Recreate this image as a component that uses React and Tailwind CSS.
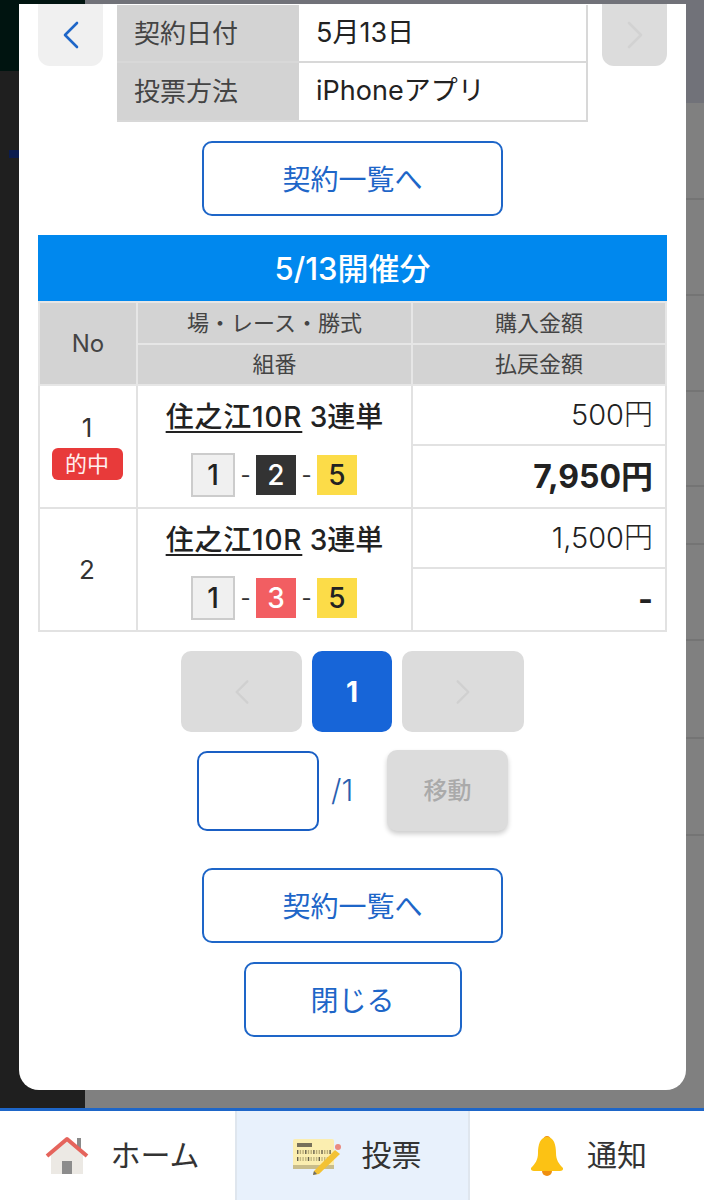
import { useState } from 'react'

function Chevron({ dir, className }) {
  return (
    <svg className={className} viewBox="0 0 18 28" fill="none" stroke="currentColor" strokeWidth="2.6" strokeLinecap="round" strokeLinejoin="round">
      <path d={dir === 'left' ? 'M15 2 L3 14 L15 26' : 'M3 2 L15 14 L3 26'} />
    </svg>
  )
}

function OutlineButton({ label, width }) {
  return (
    <button className={`${width} h-[75px] pt-[3px] border-2 border-[#1e66c8] rounded-[10px] bg-white text-[#1e66c8] text-[28px] leading-none flex items-center justify-center`}>
      {label}
    </button>
  )
}

function Ball({ n, variant }) {
  if (variant === 'white') {
    return <span className="w-[44px] h-[44px] bg-[#f0f0f0] border-2 border-[#cccccc] text-[#222] text-[28px] font-medium flex items-center justify-center">{n}</span>
  }
  if (variant === 'black') {
    return <span className="w-[40px] h-[40px] bg-[#333333] text-white text-[28px] font-medium flex items-center justify-center">{n}</span>
  }
  if (variant === 'red') {
    return <span className="w-[40px] h-[40px] bg-[#f25e62] text-white text-[28px] font-medium flex items-center justify-center">{n}</span>
  }
  return <span className="w-[40px] h-[40px] bg-[#fcdc48] text-[#222] text-[28px] font-medium flex items-center justify-center">{n}</span>
}

function Dash() {
  return <span className="w-[21px] text-center text-[#333] text-[22px] leading-none">-</span>
}

function BetCell({ second }) {
  return (
    <td rowSpan={2} className="border-2 border-[#e2e2e2] text-center align-top p-0">
      <div className="mt-[13px] text-[28px] leading-[36px] font-medium text-[#222]">
        <span className="underline underline-offset-[4px] tracking-[0.8px]">住之江10R</span> 3連単
      </div>
      <div className="mt-[18px] pr-[1px] flex items-center justify-center">
        <Ball n="1" variant="white" />
        <Dash />
        <Ball n={second} variant={second === '2' ? 'black' : 'red'} />
        <Dash />
        <Ball n="5" variant="yellow" />
      </div>
    </td>
  )
}

function ResultRows({ no, hit, second, buy, pay, top, bottom }) {
  return (
    <>
      <tr className={top}>
        <td rowSpan={2} className="border-2 border-[#e2e2e2] text-center text-[26px] leading-[34px] text-[#333] p-0 pr-[2px]">
          <div className={hit ? 'mt-[-3px]' : ''}>{no}</div>
          {hit && (
            <div className="mx-auto mt-[3px] w-[71px] h-[32px] bg-[#e83a3a] rounded-md text-[#ffeeee] text-[22px] leading-[32px]">的中</div>
          )}
        </td>
        <BetCell second={second} />
        <td className="border-2 border-[#e2e2e2] text-right pr-[12px] text-[29px] font-light text-[#222] p-0">{buy}</td>
      </tr>
      <tr className={bottom}>
        <td className="border-2 border-[#e2e2e2] text-right pr-[12px] text-[32px] font-bold text-[#222] p-0">{pay}</td>
      </tr>
    </>
  )
}

function HomeIcon() {
  return (
    <svg className="w-[44px] h-[40px]" viewBox="0 0 44 40">
      <rect x="32" y="2" width="4" height="12" fill="#8a8a8a" />
      <path d="M6 18 L22 4 L38 18 V38 H6 Z" fill="#ece9e4" />
      <path d="M2 20 L22 3 L42 20" fill="none" stroke="#e5645c" strokeWidth="4" strokeLinejoin="round" />
      <rect x="17" y="25" width="10" height="13" fill="#8c8c8c" />
    </svg>
  )
}

function VoteIcon() {
  const dots = [0, 1, 2, 3, 4, 5, 6, 7, 8, 9, 10, 11, 12]
  return (
    <svg className="w-[52px] h-[40px]" viewBox="0 0 52 40">
      <rect x="2" y="3" width="41" height="30" rx="2" fill="#fbeeb0" />
      <rect x="2" y="29" width="41" height="4" fill="#c9bd8a" />
      <rect x="6" y="7" width="15" height="4" fill="#77705a" />
      {dots.map((i) => (
        <rect key={`a${i}`} x={6 + i * 2.7} y="14" width="1.4" height="4" fill={i % 3 === 0 ? '#66604c' : '#b8ab76'} />
      ))}
      {dots.map((i) => (
        <rect key={`b${i}`} x={6 + i * 2.7} y="21" width="1.4" height="4" fill={i % 4 === 0 ? '#66604c' : '#c4b880'} />
      ))}
      <path d="M23 35 L44 14 L49 18 L28 38 L22 39 Z" fill="#f3c234" />
      <path d="M22 39 L23 35 L26 38 Z" fill="#6b6b6b" />
      <circle cx="47" cy="11" r="3" fill="#e98a80" />
    </svg>
  )
}

function BellIcon() {
  return (
    <svg className="w-[36px] h-[42px]" viewBox="0 0 36 42">
      <circle cx="18" cy="4.5" r="3.5" fill="#ef8f10" />
      <circle cx="18" cy="36" r="5" fill="#ef8f10" />
      <path d="M18 2 C25 2 27 10 27 18 C27 25 30 29 34 33 C34.5 35 33 36 31 36 H5 C3 36 1.500 35 2 33 C6 29 9 25 9 18 C9 10 11 2 18 2 Z" fill="#fcc214" />
    </svg>
  )
}

export default function App() {
  const [page, setPage] = useState('')

  return (
    <div
      className="w-[704px] h-[1200px] flex flex-col overflow-hidden bg-white"
      style={{ fontFamily: 'Inter, "Noto Sans CJK JP", "Noto Sans", sans-serif' }}
    >
      {/* dimmed page behind the modal */}
      <div className="relative flex-1 flex min-h-0">
        <div className="w-[85px] flex flex-col bg-[#1f1f1f]">
          <div className="h-[71px] bg-[#001410]" />
          <div className="mt-[79px] ml-[9px] w-[10px] h-[8px] bg-[#0b1c4e]" />
        </div>
        <div className="flex-1 flex flex-col bg-[#808080]">
          <div className="h-[103px] bg-[#717279]" />
          <div className="h-[97px] border-b-2 border-[#747474]" />
          <div className="h-[96px] border-b-2 border-[#747474]" />
          <div className="h-[96px] border-b-2 border-[#747474]" />
          <div className="h-[95px] border-b-2 border-[#747474]" />
          <div className="h-[58px] border-b-2 border-[#747474]" />
          <div className="h-[96px] border-b-2 border-[#747474]" />
          <div className="h-[98px] border-b-2 border-[#747474]" />
          <div className="h-[97px] border-b-2 border-[#747474]" />
        </div>

        {/* modal */}
        <div className="absolute left-[19px] top-[4px] w-[667px] h-[1086px] bg-white rounded-b-[20px] px-[19px] flex flex-col items-center">
          <div className="w-full flex justify-between items-start">
            <button className="w-[65px] h-[62px] bg-[#f0f0f0] rounded-b-xl flex items-center justify-center text-[#1e66c8]">
              <Chevron dir="left" className="w-[18px] h-[28px]" />
            </button>
            <div className="mt-[1px] w-[471px] grid grid-cols-[182px_1fr] gap-y-[2px] text-[26px] bg-[#d8d8d8] border-r-2 border-b-2 border-[#d8d8d8]">
              <div className="h-[56px] bg-[#d3d3d3] text-[#444] pl-[17px] flex items-center">契約日付</div>
              <div className="h-[56px] pl-[15px] bg-white border-l-2 border-white text-[#222] text-[27px] flex items-center">5月13日</div>
              <div className="h-[57px] bg-[#d3d3d3] text-[#444] pl-[17px] flex items-center">投票方法</div>
              <div className="h-[57px] pl-[15px] bg-white border-l-2 border-white text-[#222] text-[27px] flex items-center">iPhoneアプリ</div>
            </div>
            <button className="w-[65px] h-[62px] bg-[#dcdcdc] rounded-b-xl flex items-center justify-center text-[#d2d2d2]">
              <Chevron dir="right" className="w-[18px] h-[28px]" />
            </button>
          </div>

          <div className="mt-[19px]">
            <OutlineButton label="契約一覧へ" width="w-[301px]" />
          </div>

          <div className="mt-[19px] w-full h-[66px] pt-[2px] bg-[#0088ee] text-white text-[31px] font-medium flex items-center justify-center">
            5/13開催分
          </div>

          {/* result table */}
          <table className="w-full table-fixed border-collapse">
            <colgroup>
              <col className="w-[98px]" />
              <col className="w-[275px]" />
              <col />
            </colgroup>
            <thead className="bg-[#d3d3d3] text-[#444] text-[22px]">
              <tr className="h-[42px]">
                <th rowSpan={2} className="font-normal text-[24px] border-2 border-[#e6e6e6]">No</th>
                <th className="font-normal border-2 border-[#e6e6e6]">場・レース・勝式</th>
                <th className="font-normal border-2 border-[#e6e6e6]">購入金額</th>
              </tr>
              <tr className="h-[41px]">
                <th className="font-normal border-2 border-[#e6e6e6]">組番</th>
                <th className="font-normal border-2 border-[#e6e6e6]">払戻金額</th>
              </tr>
            </thead>
            <tbody>
              <ResultRows no="1" hit second="2" buy="500円" pay="7,950円" top="h-[60px]" bottom="h-[63px]" />
              <ResultRows no="2" second="3" buy="1,500円" pay="-" top="h-[60px]" bottom="h-[63px]" />
            </tbody>
          </table>

          {/* pagination */}
          <div className="mt-[19px] flex gap-[10px]">
            <button className="w-[121px] h-[81px] bg-[#dcdcdc] rounded-[10px] flex items-center justify-center text-[#d0d0d0]">
              <Chevron dir="left" className="w-[16px] h-[26px]" />
            </button>
            <button className="w-[80px] h-[81px] bg-[#1765d8] rounded-[10px] text-white text-[28px] font-bold">1</button>
            <button className="w-[122px] h-[81px] bg-[#dcdcdc] rounded-[10px] flex items-center justify-center text-[#d0d0d0]">
              <Chevron dir="right" className="w-[16px] h-[26px]" />
            </button>
          </div>

          <div className="mt-[18px] flex items-center">
            <input
              value={page}
              onChange={(e) => setPage(e.target.value)}
              className="w-[122px] h-[80px] border-2 border-[#1a5fc4] rounded-[10px] bg-white outline-none"
            />
            <span className="ml-[12px] w-[56px] text-[#2a5fb0] text-[30px] font-light">/1</span>
            <button className="w-[121px] h-[81px] bg-[#dcdcdc] rounded-[10px] text-[#aaaaaa] text-[24px] font-medium shadow-[0_3px_5px_rgba(0,0,0,0.2)]">移動</button>
          </div>

          <div className="mt-[37px]">
            <OutlineButton label="契約一覧へ" width="w-[301px]" />
          </div>
          <div className="mt-[19px]">
            <OutlineButton label="閉じる" width="w-[218px]" />
          </div>
        </div>
      </div>

      {/* bottom nav */}
      <div className="h-[92px] border-t-[3px] border-[#1e66c8] bg-white flex text-[#333] text-[30px]">
        <div className="w-[235px] flex items-center justify-center gap-[21px] pl-[10px]">
          <HomeIcon />
          <span>ホーム</span>
        </div>
        <div className="w-[235px] bg-[#e8f1fc] border-x-2 border-[#dfe6ee] flex items-center justify-center gap-[19px] pl-[7px]">
          <VoteIcon />
          <span>投票</span>
        </div>
        <div className="flex-1 flex items-center justify-center gap-[22px] pl-[2px]">
          <BellIcon />
          <span>通知</span>
        </div>
      </div>
    </div>
  )
}
